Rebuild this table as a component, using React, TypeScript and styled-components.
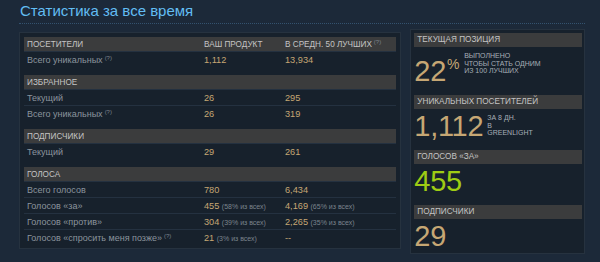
import React from "react";
import styled, { createGlobalStyle } from "styled-components";

const Global = createGlobalStyle`
  html, body { margin: 0; padding: 0; background: #1b2838; }
  body { font-family: "Liberation Sans", Arial, sans-serif; width: 600px; height: 262px; overflow: hidden; }
`;

const Page = styled.div`
  width: 600px;
  height: 262px;
  box-sizing: border-box;
  padding: 0 15px 0 19px;
  background: #1c2939;
`;

const Title = styled.h2`
  margin: 0;
  padding: 2px 0 3px 1px;
  font-weight: normal;
  font-size: 15px;
  line-height: 18px;
  color: #62bdf3;
  border-bottom: 1px dotted #33526f;
`;

const Body = styled.div`
  display: flex;
  align-items: flex-start;
  gap: 9px;
  margin-top: 8px;
`;

const TablePanel = styled.div`
  width: 383px;
  box-sizing: border-box;
  padding: 4px 4px 3px 4px;
  background: #17212c;
  border: 1px solid #26323f;
`;

const Section = styled.div`
  margin-bottom: 8px;
  &:last-child { margin-bottom: 0; }
`;

const Grid = styled.div<{ $header?: boolean }>`
  display: grid;
  grid-template-columns: 177px 81px 1fr;
  align-items: center;
  height: ${(p) => (p.$header ? "14px" : "16px")};
  box-sizing: border-box;
  padding-left: 3px;
  background: ${(p) => (p.$header ? "#3b3c3d" : "transparent")};
  color: ${(p) => (p.$header ? "#c4c4c4" : "#8b949d")};
  font-size: ${(p) => (p.$header ? "8.2px" : "9px")};
  text-transform: ${(p) => (p.$header ? "uppercase" : "none")};
  white-space: nowrap;
  & + & { border-top: 1px solid #243140; }
`;

const Num = styled.span`
  color: #c6a774;
  font-size: 9.2px;
`;

const Pct = styled.span`
  color: #7b848d;
  font-size: 7px;
`;

const Hint = styled.sup`
  font-size: 6px;
  color: #7b848d;
  vertical-align: 3px;
  margin-left: 2px;
`;

const SidePanel = styled.div`
  width: 175px;
  box-sizing: border-box;
  margin-top: -3px;
  padding: 3px 2px 0 3px;
  background: #17212c;
  border: 1px solid #26323f;
`;

const Stat = styled.div`
  margin-bottom: 7px;
  &:last-child { margin-bottom: 0; }
`;

const StatHead = styled.div`
  height: 14px;
  line-height: 14px;
  padding-left: 3px;
  background: #3b3c3d;
  color: #c4c4c4;
  font-size: 8.2px;
  text-transform: uppercase;
`;

const StatRow = styled.div`
  display: flex;
  align-items: flex-start;
`;

const Big = styled.div<{ $green?: boolean }>`
  font-size: 29px;
  line-height: 34px;
  color: ${(p) => (p.$green ? "#9fcc14" : "#c6a774")};
  letter-spacing: -0.3px;
`;

const Sup = styled.span`
  font-size: 14px;
  vertical-align: 12px;
  margin-left: 1px;
`;

const Note = styled.div<{ $left: number }>`
  margin-left: ${(p) => p.$left}px;
  margin-top: 5px;
  font-size: 7px;
  line-height: 7.5px;
  color: #a7afb7;
  text-transform: uppercase;
`;

type Row = { label: string; hint?: boolean; a: React.ReactNode; b: React.ReactNode };
type Sec = { title: string; rows: Row[] };

const sections: Sec[] = [
  { title: "ПОСЕТИТЕЛИ", rows: [{ label: "Всего уникальных", hint: true, a: "1,112", b: "13,934" }] },
  {
    title: "ИЗБРАННОЕ",
    rows: [
      { label: "Текущий", a: "26", b: "295" },
      { label: "Всего уникальных", hint: true, a: "26", b: "319" },
    ],
  },
  { title: "ПОДПИСЧИКИ", rows: [{ label: "Текущий", a: "29", b: "261" }] },
  {
    title: "ГОЛОСА",
    rows: [
      { label: "Всего голосов", a: "780", b: "6,434" },
      { label: "Голосов «за»", a: ["455", "58%"], b: ["4,169", "65%"] },
      { label: "Голосов «против»", a: ["304", "39%"], b: ["2,265", "35%"] },
      { label: "Голосов «спросить меня позже»", hint: true, a: ["21", "3%"], b: "--" },
    ],
  },
];

const Value = ({ v }: { v: React.ReactNode }) => {
  if (Array.isArray(v)) {
    return (
      <span>
        <Num>{v[0]}</Num> <Pct>({v[1]} из всех)</Pct>
      </span>
    );
  }
  return <Num>{v}</Num>;
};

export default function App() {
  return (
    <>
      <Global />
      <Page>
        <Title>Статистика за все время</Title>
        <Body>
          <TablePanel>
            {sections.map((s, i) => (
              <Section key={s.title}>
                <Grid $header>
                  <span>{s.title}</span>
                  <span>{i === 0 ? "Ваш продукт" : ""}</span>
                  <span>
                    {i === 0 ? (
                      <>
                        В средн. 50 лучших<Hint>(?)</Hint>
                      </>
                    ) : (
                      ""
                    )}
                  </span>
                </Grid>
                {s.rows.map((r) => (
                  <Grid key={r.label}>
                    <span>
                      {r.label}
                      {r.hint && <Hint>(?)</Hint>}
                    </span>
                    <Value v={r.a} />
                    <Value v={r.b} />
                  </Grid>
                ))}
              </Section>
            ))}
          </TablePanel>
          <SidePanel>
            <Stat>
              <StatHead>Текущая позиция</StatHead>
              <StatRow>
                <Big>
                  22<Sup>%</Sup>
                </Big>
                <Note $left={5}>
                  Выполнено
                  <br />
                  чтобы стать одним
                  <br />
                  из 100 лучших
                </Note>
              </StatRow>
            </Stat>
            <Stat>
              <StatHead>Уникальных посетителей</StatHead>
              <StatRow>
                <Big>1,112</Big>
                <Note $left={4}>
                  За 8 дн.
                  <br />в
                  <br />
                  Greenlight
                </Note>
              </StatRow>
            </Stat>
            <Stat>
              <StatHead>Голосов «за»</StatHead>
              <Big $green>455</Big>
            </Stat>
            <Stat>
              <StatHead>Подписчики</StatHead>
              <Big>29</Big>
            </Stat>
          </SidePanel>
        </Body>
      </Page>
    </>
  );
}
